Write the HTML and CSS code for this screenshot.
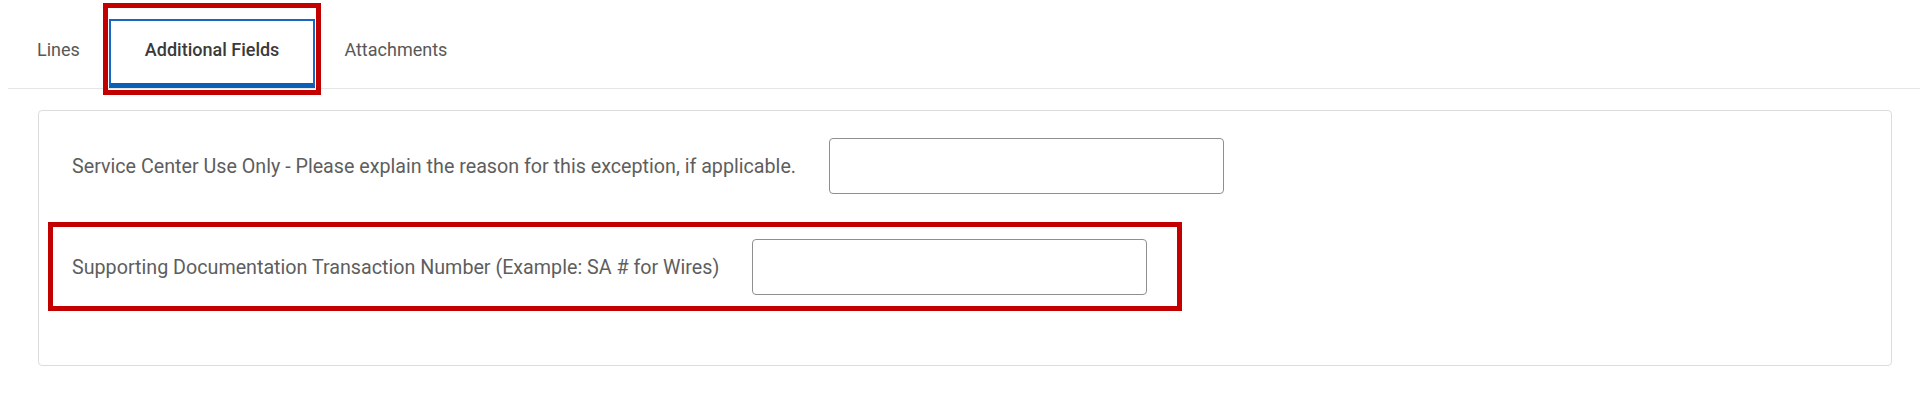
FILE: index.html
```html
<!DOCTYPE html>
<html lang="en">
<head>
<meta charset="utf-8">
<title>Additional Fields</title>
<link rel="stylesheet" href="styles.css">
</head>
<body>
  <nav class="tabbar">
    <div class="tab">Lines</div>
    <div class="tab tab-active">Additional Fields<span class="callout callout-tab"></span></div>
    <div class="tab">Attachments</div>
  </nav>
  <section class="panel">
    <div class="field-row">
      <label class="field-label">Service Center Use Only - Please explain the reason for this exception, if applicable.</label>
      <div class="field-input"></div>
    </div>
    <div class="field-row field-row-marked">
      <label class="field-label">Supporting Documentation Transaction Number (Example: SA # for Wires)</label>
      <div class="field-input"></div>
      <span class="callout callout-row"></span>
    </div>
  </section>
</body>
</html>
```
FILE: styles.css
```css
html, body {
  margin: 0;
  padding: 0;
  background: #ffffff;
}

body {
  font-family: Roboto, "Liberation Sans", Arial, sans-serif;
  font-size: 18px;
  color: #5e5e5e;
}

.tabbar {
  display: flex;
  margin-left: 8px;
  padding-top: 19px;
  border-bottom: 1px solid #e6e6e6;
}

.tab {
  position: relative;
  box-sizing: border-box;
  height: 69px;
  display: flex;
  align-items: center;
  padding: 0 27px 5px 27px;
  border: 2px solid transparent;
  border-bottom-width: 5px;
  color: #585858;
  white-space: nowrap;
}

.tab-active {
  padding: 0 34px 5px 34px;
  border-color: #1766c2;
  border-bottom-color: #0d5cb6;
  color: #3a3a3a;
  font-weight: 500;
}

.callout {
  position: absolute;
  border: 5px solid #c20000;
  pointer-events: none;
}

.callout-tab {
  left: -8px;
  right: -8px;
  top: -18px;
  bottom: -12px;
}

.panel {
  box-sizing: border-box;
  margin: 21px 0 0 38px;
  width: 1854px;
  padding: 27px 32px 70px 33px;
  border: 1px solid #dcdcdc;
  border-radius: 4px;
  display: flex;
  flex-direction: column;
  gap: 45px;
}

.field-row {
  position: relative;
  display: flex;
  align-items: center;
  gap: 33px;
  height: 56px;
}

.field-label {
  white-space: nowrap;
  font-size: 19.7px;
  color: #5e5e5e;
}

.field-input {
  box-sizing: border-box;
  width: 395px;
  height: 56px;
  border: 1px solid #8f8f8f;
  border-radius: 4px;
  background: #ffffff;
}

.field-row-marked {
  align-self: flex-start;
}

.callout-row {
  left: -24px;
  right: -35px;
  top: -17px;
  bottom: -16px;
}
```
